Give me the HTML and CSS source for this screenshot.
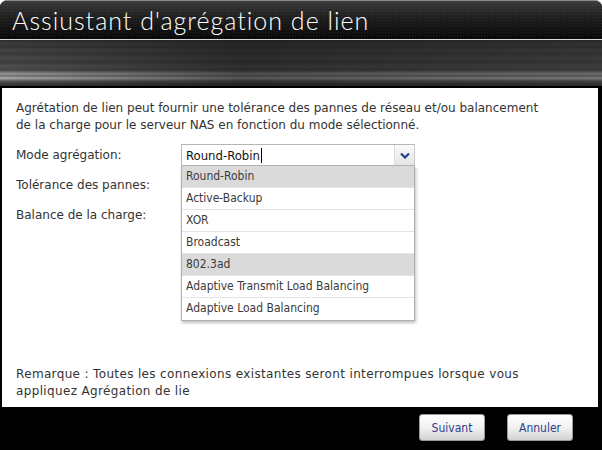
FILE: index.html
```html
<!DOCTYPE html>
<html lang="fr">
	<head>
		<meta charset="UTF-8" />
		<title>Assiustant d'agrégation de lien</title>
		<link rel="stylesheet" href="styles.css">
	</head>
	<body>
		<div class="window">
			<header class="title-bar">
				<h1>Assiustant d'agrégation de lien</h1>
			</header>
			<div class="banner"></div>

			<main class="content">
				<p class="intro">
					Agrétation de lien peut fournir une tolérance des pannes de réseau et/ou balancement<br>
					de la charge pour le serveur NAS en fonction du mode sélectionné.
				</p>

				<div class="form">
					<div class="row">
						<label>Mode agrégation:</label>
						<div class="combo">
							<div class="combo-field">
								<span class="combo-value">Round-Robin</span><span class="caret"></span>
								<span class="combo-btn">
									<svg width="10" height="7" viewBox="0 0 10 7">
										<path d="M1 1.5 L5 5.5 L9 1.5" fill="none" stroke="#1f3f8f" stroke-width="2.2" />
									</svg>
								</span>
							</div>
							<!-- open list lies over the rows below -->
							<ul class="combo-list">
								<li class="hl">Round-Robin</li>
								<li>Active-Backup</li>
								<li>XOR</li>
								<li>Broadcast</li>
								<li class="hl">802.3ad</li>
								<li>Adaptive Transmit Load Balancing</li>
								<li>Adaptive Load Balancing</li>
							</ul>
						</div>
					</div>
					<div class="row">
						<label>Tolérance des pannes:</label>
					</div>
					<div class="row">
						<label>Balance de la charge:</label>
					</div>
				</div>

				<p class="note">
					Remarque : Toutes les connexions existantes seront interrompues lorsque vous<br>
					appliquez Agrégation de lie
				</p>
			</main>

			<footer class="actions">
				<button class="btn">Suivant</button>
				<button class="btn">Annuler</button>
			</footer>
		</div>
	</body>
</html>
```

FILE: styles.css
```css
* {
	margin: 0;
	padding: 0;
	box-sizing: border-box;
}

body {
	background: #fff;
	font-family: "DejaVu Sans", sans-serif;
	font-size: 12px;
	color: #333;
}

.window {
	width: 602px;
	height: 450px;
	background: #000;
	border-radius: 7px 7px 0 0;
	border-top: 1px solid #8a8a8a;
	display: flex;
	flex-direction: column;
	overflow: hidden;
}

/* title bar with dark carbon look */
.title-bar {
	height: 39px;
	padding-left: 12px;
	border-bottom: 1px solid #d8d8d8;
	background:
		radial-gradient(circle, rgba(255, 255, 255, 0.06) 1px, transparent 1px) 0 0 / 3px 3px,
		linear-gradient(#3a3a3a, #1e1e1e 45%, #080808);
}

.title-bar h1 {
	font-family: "Lato", "DejaVu Sans", sans-serif;
	font-weight: 300;
	font-size: 25px;
	line-height: 38px;
	color: #fff;
	letter-spacing: 1px;
	white-space: nowrap;
}

/* brushed metal strip */
.banner {
	height: 48px;
	border-bottom: 2px solid #000;
	background:
		linear-gradient(90deg, rgba(0, 0, 0, 0) 0%, rgba(20, 20, 20, 0.55) 40%, rgba(30, 30, 30, 0.35) 100%),
		linear-gradient(180deg,
			#2c2c2c 0px, #3e3e3e 4px, #333 7px, #454545 10px, #3a3a3a 14px,
			#4a4a4a 18px, #3c3c3c 22px, #505050 26px, #444 30px,
			#9a9a9a 34px, #6c6c6c 36px, #b0b0b0 38px, #585858 41px, #3a3a3a 44px, #2a2a2a 48px);
}

.content {
	height: 319px;
	margin: 0 4px 0 2px;
	background: #fff;
	padding: 12px 14px 0 14px;
	display: flex;
	flex-direction: column;
	line-height: 17px;
}

.intro {
	margin-bottom: 10px;
	white-space: nowrap;
}

.form {
	display: flex;
	flex-direction: column;
	gap: 8px;
}

.row {
	display: grid;
	grid-template-columns: 165px 234px;
	align-items: center;
	height: 22px;
}

.combo {
	position: relative;
}

.combo-field {
	display: flex;
	align-items: center;
	height: 22px;
	border: 1px solid #b5b5b5;
	border-right-color: #ccc;
	background: #fff;
	padding-left: 4px;
	font-family: "DejaVu Sans Condensed", "DejaVu Sans", sans-serif;
	font-size: 13px;
	color: #111;
}

.caret {
	width: 1px;
	height: 15px;
	background: #000;
	margin-left: 1px;
}

.combo-btn {
	margin-left: auto;
	width: 20px;
	height: 20px;
	display: flex;
	align-items: center;
	justify-content: center;
	background: linear-gradient(#fbfbfb, #e4e4e4);
	border-left: 1px solid #ddd;
}

.combo-list {
	position: absolute;
	top: 22px;
	left: 0;
	width: 234px;
	list-style: none;
	background: #fff;
	border: 1px solid #b0b0b0;
	border-top: none;
	box-shadow: 1px 2px 3px rgba(0, 0, 0, 0.25);
	z-index: 2;
	font-family: "DejaVu Sans Condensed", "DejaVu Sans", sans-serif;
}

.combo-list li {
	height: 22px;
	line-height: 21px;
	padding-left: 4px;
	border-bottom: 1px solid #e4e4e4;
	color: #3a3a3a;
}

.combo-list li:last-child {
	border-bottom: none;
}

.combo-list li.hl {
	background: #dadada;
}

.note {
	margin-top: auto;
	margin-bottom: 7px;
	white-space: nowrap;
	letter-spacing: 0.35px;
}

.actions {
	height: 41px;
	display: flex;
	justify-content: flex-end;
	align-items: center;
	gap: 22px;
	padding-right: 29px;
}

.btn {
	width: 66px;
	height: 27px;
	border: 1px solid #9a9a9a;
	border-radius: 3px;
	background: linear-gradient(#ffffff, #f1f1f1 50%, #d2d2d2);
	font-family: "DejaVu Sans Condensed", "DejaVu Sans", sans-serif;
	font-size: 12px;
	color: #2c3e8c;
}
```
